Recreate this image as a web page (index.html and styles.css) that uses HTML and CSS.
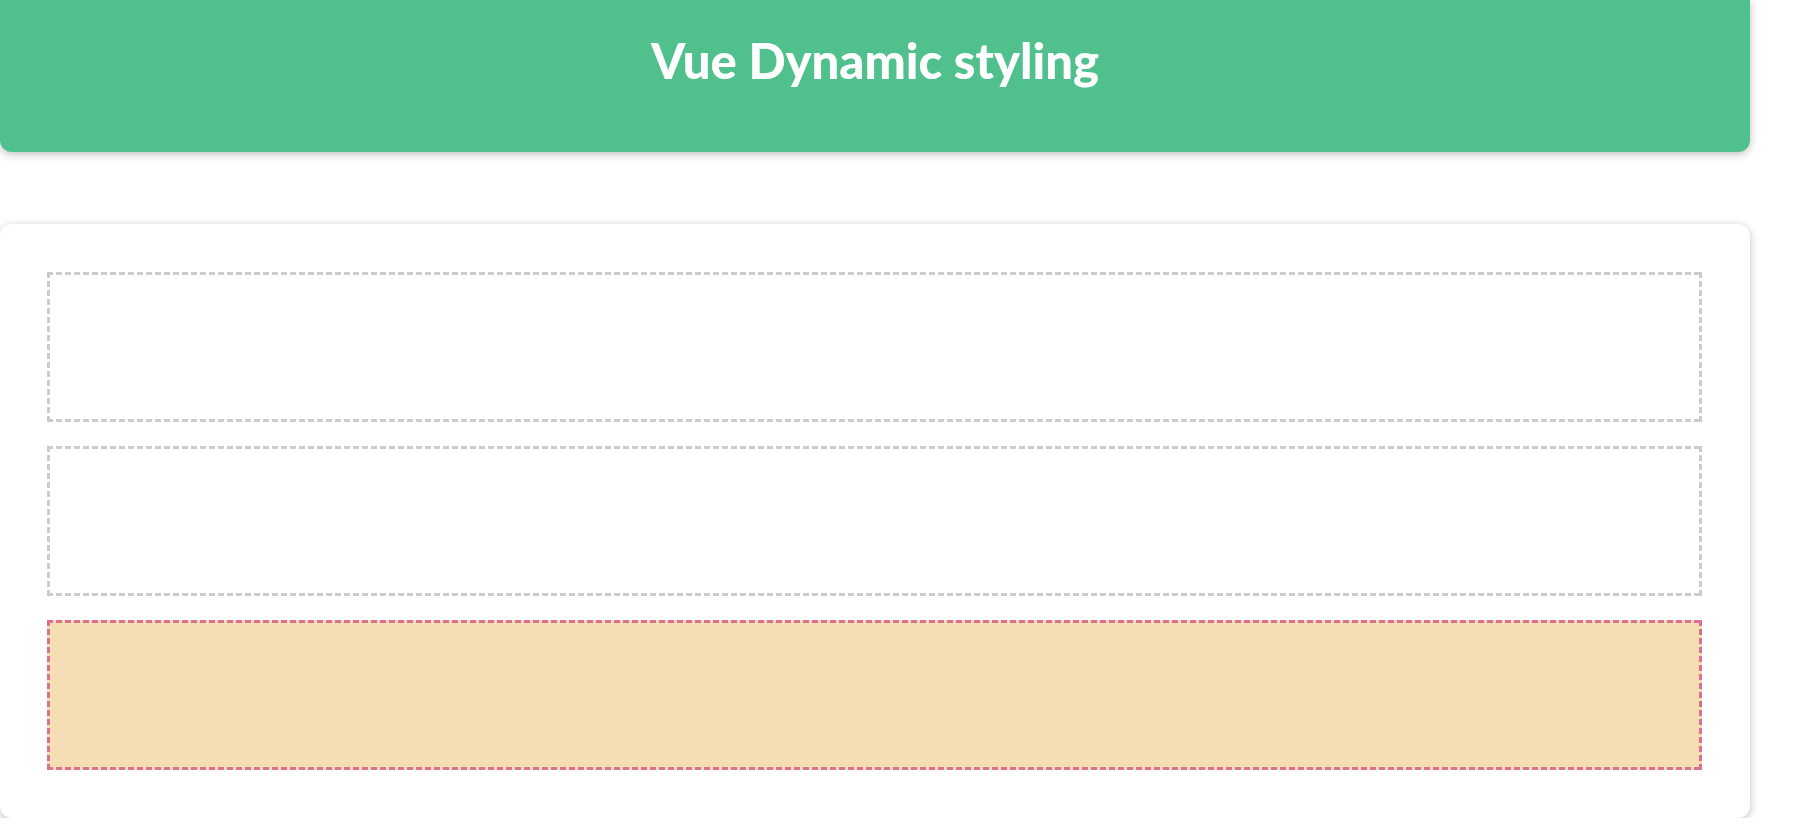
FILE: index.html
```html
<!DOCTYPE html>
<html lang="en">
<head>
<meta charset="utf-8">
<title>Vue Dynamic styling</title>
<link rel="stylesheet" href="styles.css">
</head>
<body>
<div class="page">
  <header class="app-header">
    <h1 class="app-title">Vue Dynamic styling</h1>
  </header>
  <section class="card">
    <div class="demo"></div>
    <div class="demo"></div>
    <div class="demo demo--active"></div>
  </section>
</div>
</body>
</html>
```
FILE: styles.css
```css
html, body {
  margin: 0;
  padding: 0;
  background: #ffffff;
}

body {
  font-family: Lato, "Open Sans", "Liberation Sans", sans-serif;
}

.page {
  width: 1750px;
  display: flex;
  flex-direction: column;
  gap: 72px;
}

.app-header {
  height: 152px;
  box-sizing: border-box;
  background: #50c08d;
  border-radius: 0 0 12px 12px;
  box-shadow: 0 2px 8px rgba(0, 0, 0, 0.26);
  display: flex;
  justify-content: center;
  padding-top: 31px;
}

.app-title {
  margin: 0;
  color: #ffffff;
  font-size: 49px;
  font-weight: 900;
  line-height: 58px;
  letter-spacing: 0;
}

.card {
  background: #ffffff;
  border-radius: 12px;
  box-shadow: 0 2px 8px rgba(0, 0, 0, 0.26);
  padding: 48px 48px 48px 47px;
  display: flex;
  flex-direction: column;
  gap: 24px;
}

.demo {
  --dash: #cccccc;
  height: 150px;
  background:
    repeating-linear-gradient(90deg, var(--dash) 0 6px, transparent 6px 9px) left top / 100% 3px no-repeat,
    repeating-linear-gradient(90deg, var(--dash) 0 6px, transparent 6px 9px) left bottom / 100% 3px no-repeat,
    repeating-linear-gradient(180deg, var(--dash) 0 6px, transparent 6px 9px) left top / 3px 100% no-repeat,
    repeating-linear-gradient(180deg, var(--dash) 0 6px, transparent 6px 9px) right top / 3px 100% no-repeat;
}

.demo--active {
  --dash: #db7093;
  background-color: #f5deb3;
}
```
